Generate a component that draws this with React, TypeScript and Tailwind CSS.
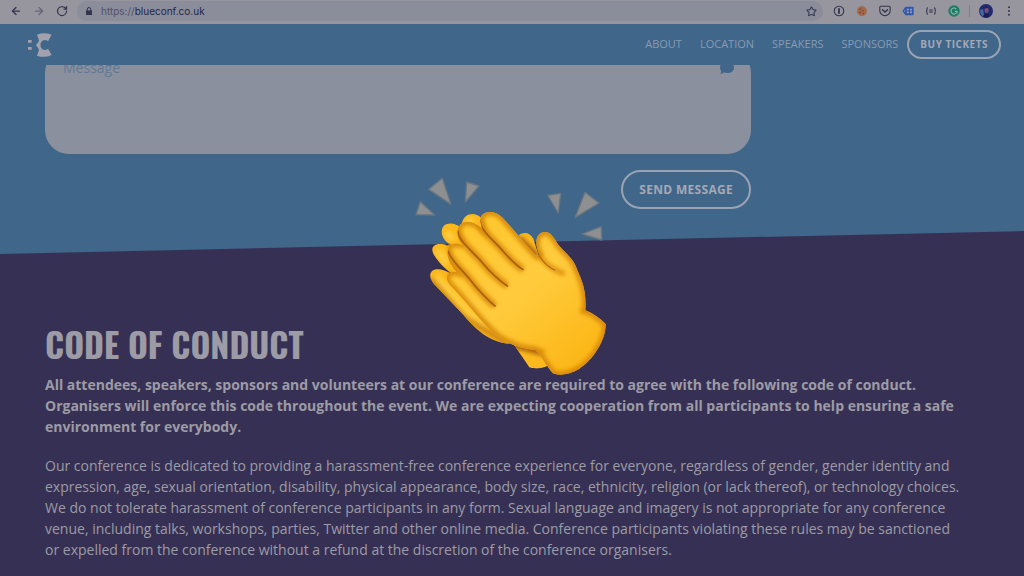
import type { ReactNode } from "react";
import { ArrowLeft, ArrowRight, RotateCw, Star } from "lucide-react";

const links = ["About", "Location", "Speakers", "Sponsors"];

const ToolbarButton = ({
  label,
  children,
}: {
  label: string;
  children: ReactNode;
}) => (
  <button
    type="button"
    aria-label={label}
    className="flex h-5 w-[23px] shrink-0 items-center justify-center"
  >
    {children}
  </button>
);

const LockIcon = () => (
  <svg viewBox="0 0 8 8" className="size-2" fill="currentColor">
    <path d="M1 3.400h6V8H1z" />
    <path d="M2.300 4V2.200a1.700 1.700 0 0 1 3.400 0V4" fill="none" stroke="currentColor" strokeWidth="1" />
  </svg>
);

const PocketIcon = () => (
  <svg viewBox="0 0 12 12" className="size-3" fill="none" stroke="currentColor">
    <path
      d="M1.8 1.3h8.4a1 1 0 0 1 1 1v3.2a5.2 5.2 0 0 1-10.4 0V2.3a1 1 0 0 1 1-1z"
      strokeWidth="1.1"
    />
    <path d="M3.5 4.7 6 7l2.5-2.3" strokeWidth="1.4" strokeLinecap="round" />
  </svg>
);

const OnePasswordIcon = () => (
  <svg viewBox="0 0 12 12" className="size-3" fill="none" stroke="currentColor">
    <circle cx="6" cy="6" r="4.8" strokeWidth="1.1" />
    <path d="M6 3.2v5.6" strokeWidth="1.8" />
  </svg>
);

const CookieIcon = () => (
  <svg viewBox="0 0 12 12" className="size-3">
    <path
      d="M6 1a5 5 0 1 0 5 5.3L10.600 4.600 9.400 2.800 7.600 1.400z"
      fill="#a46848"
    />
    <g fill="#603c3b">
      <circle cx="4.200" cy="4" r=".7" />
      <circle cx="7" cy="5.800" r=".7" />
      <circle cx="4" cy="7.500" r=".8" />
      <circle cx="7.300" cy="8.600" r=".6" />
    </g>
  </svg>
);

const TagIcon = () => (
  <svg viewBox="0 0 12 12" className="size-3">
    <path d="M3.5 1.8h7.3a.8.8 0 0 1 .8.8v6.8a.8.8 0 0 1-.8.8H3.5L.4 6z" fill="#3157ac" />
    <path
      d="M4.8 3.8h2v1.6h-2zM8 3.8h2v1.6H8zM4.8 6.6h2v1.6h-2zM8 6.6h2v1.6H8z"
      fill="#929ab8"
    />
    <circle cx="2.7" cy="6" r=".7" fill="#929ab8" />
  </svg>
);

const BracesIcon = () => (
  <svg viewBox="0 0 12 12" className="size-3" fill="none" stroke="currentColor">
    <path
      d="M3 2.700c-1.200 0-1 .9-1 1.900S1.700 6 1 6c.7 0 1 .400 1 1.400s-.2 1.900 1 1.900M9 2.700c1.200 0 1 .9 1 1.900S10.300 6 11 6c-.7 0-1 .400-1 1.400s.2 1.900-1 1.900"
      strokeWidth="1.100"
    />
    <path d="M4.200 5h3.600M4.200 7h3.600" strokeWidth="1.200" />
  </svg>
);

const GrammarlyIcon = () => (
  <svg viewBox="0 0 12 12" className="size-3" fill="none">
    <circle cx="6" cy="6" r="5.700" fill="#168067" />
    <path
      d="M8.200 4A3 3 0 1 0 9 6.400H6.800M9 6.400v1.800"
      stroke="#a0aaa9"
      strokeWidth="1.100"
    />
  </svg>
);

const Avatar = () => (
  <svg viewBox="0 0 14 14" className="size-3.5">
    <circle cx="7" cy="7" r="7" fill="#202a72" />
    <path d="M1 6l3-1 1 6-2 1A7 7 0 0 1 1 6z" fill="#49689d" />
    <path d="M5 13c.3-3 1-3.500 2.500-3.500S10 10.500 10 13a7 7 0 0 1-5 0z" fill="#1b1d4a" />
    <ellipse cx="7.600" cy="6" rx="2.100" ry="3" fill="#78507c" />
    <path d="M5.200 5c0-3 4.800-3 4.800 0-1-1.200-3.500-1.200-4.800 0z" fill="#24204c" />
  </svg>
);

const BrowserBar = () => (
  <div className="flex h-6 items-center bg-[#97959e] px-1 pb-0.5 text-[#34344f]">
    <ToolbarButton label="Back">
      <ArrowLeft className="size-3" strokeWidth={2.5} />
    </ToolbarButton>
    <div className="flex opacity-50">
      <ToolbarButton label="Forward">
        <ArrowRight className="size-3" strokeWidth={2.5} />
      </ToolbarButton>
    </div>
    <ToolbarButton label="Reload">
      <RotateCw className="size-3" strokeWidth={2.5} />
    </ToolbarButton>
    <div className="mx-1 flex h-5 flex-1 items-center rounded-full bg-[#8b8d9a] pl-2 pr-1">
      <LockIcon />
      <span className="flex-1 pl-2 font-['Inter',sans-serif] text-[10px] text-[#26264a]">
        <span className="text-[#50516b]">https://</span>blueconf.co.uk
      </span>
      <button type="button" aria-label="Bookmark" className="px-0.5">
        <Star className="size-[11px]" strokeWidth={2.2} />
      </button>
    </div>
    <ToolbarButton label="1Password">
      <OnePasswordIcon />
    </ToolbarButton>
    <ToolbarButton label="Cookies">
      <CookieIcon />
    </ToolbarButton>
    <ToolbarButton label="Pocket">
      <PocketIcon />
    </ToolbarButton>
    <ToolbarButton label="Tags">
      <TagIcon />
    </ToolbarButton>
    <ToolbarButton label="JSON">
      <BracesIcon />
    </ToolbarButton>
    <ToolbarButton label="Grammarly">
      <GrammarlyIcon />
    </ToolbarButton>
    <div className="mx-1 h-3 w-px bg-[#7f7e8b]" />
    <ToolbarButton label="Profile">
      <Avatar />
    </ToolbarButton>
    <ToolbarButton label="Menu">
      <svg viewBox="0 0 12 12" className="size-3" fill="currentColor">
        <circle cx="6" cy="2.200" r="1" />
        <circle cx="6" cy="6" r="1" />
        <circle cx="6" cy="9.800" r="1" />
      </svg>
    </ToolbarButton>
  </div>
);

const Logo = () => (
  <svg viewBox="0 0 75 72" className="h-6 w-[25px]" fill="#a3a1ab">
    <path d="M0 21h11v8H0zM0 42h11v8H0z" />
    <path d="M27 5q21-8 44 0L60 25q-4-4-10-4c-17 2-17 28 0 30q6 0 10-4l11 19q-21 10-44 2l6-17c-1-5-6-10-9-15 3-4 8-8 9-14z" />
  </svg>
);

const SiteHeader = () => (
  <header className="relative z-10 flex h-[41px] items-center justify-between bg-[#40668a] pl-7 pr-[23px]">
    <a href="#home" aria-label="Blueconf">
      <Logo />
    </a>
    <nav className="flex items-center">
      {links.map((link) => (
        <a
          key={link}
          href={`#${link.toLowerCase()}`}
          className="px-[9px] text-[11px] uppercase text-[#879bb2]"
        >
          {link}
        </a>
      ))}
      <a
        href="#tickets"
        className="flex h-[29px] items-center rounded-full border-2 border-[#9ba3b3] px-[11px] text-[10px] font-bold uppercase tracking-wider text-[#a4a9b6]"
      >
        Buy tickets
      </a>
    </nav>
  </header>
);

const hand =
  "M212 158C204 124 250 115 276 142C310 176 342 220 380 258L388 254C374 224 376 194 398 187C422 180 434 208 446 226C464 248 486 262 497 288C512 326 530 352 526 421C548 430 570 445 587 462C588 510 550 570 506 598C480 614 446 618 429 610C410 590 398 560 376 540C330 536 290 522 250 488C200 440 160 384 119 344C100 320 116 302 140 307C122 284 108 264 114 236C120 220 138 216 158 226C140 206 134 172 158 159C178 150 198 160 216 176Z";

const creases = [
  "M210 151C211 181 246 206 278 242Q310 280 339 299",
  "M144 184C146 214 190 246 217 278Q252 320 292 348",
  "M115 244C120 268 154 298 178 326Q215 374 255 408",
];

const ClapEmoji = () => (
  <svg
    viewBox="0 0 630 645"
    role="img"
    aria-label="Clapping hands"
    className="absolute left-1/2 top-[170px] z-20 -ml-[102px] w-[210px]"
  >
    <defs>
      <linearGradient id="skin" x1="120" y1="150" x2="480" y2="610" gradientUnits="userSpaceOnUse">
        <stop offset="0" stopColor="#ffc62b" />
        <stop offset=".5" stopColor="#ffcc3e" />
        <stop offset="1" stopColor="#fcb615" />
      </linearGradient>
      <clipPath id="front">
        <path d={hand} />
      </clipPath>
      <filter id="soft" x="-20%" y="-20%" width="140%" height="140%">
        <feGaussianBlur stdDeviation="7" />
      </filter>
      <filter id="fine" x="-20%" y="-20%" width="140%" height="140%">
        <feGaussianBlur stdDeviation="2" />
      </filter>
      <clipPath id="back">
        <path d="M155 162C162 126 196 126 212 142L230 190L150 250L160 330L180 410L300 521C240 518 196 478 160 434L80 350C52 326 56 298 82 298C98 296 110 306 124 310C100 292 74 264 68 246C62 224 84 216 112 226L120 222C94 210 86 174 108 163C126 157 142 164 150 172Z" />
        <path d="M326 196C342 184 360 188 370 206L388 262L370 255Z" />
        <path d="M312 524L380 536L412 588C396 596 374 598 358 592Z" />
      </clipPath>
    </defs>
    <g fill="#8e8f90" stroke="#687681" strokeWidth="4" strokeLinejoin="round" filter="url(#fine)">
      <path d="M97 25L56 58L123 103Z" />
      <path d="M170 36L207 48L166 96Z" />
      <path d="M31 95L18 134L74 135Z" />
      <path d="M413 76L452 70L445 129Z" />
      <path d="M525 67L567 99L495 143Z" />
      <path d="M574 170L516 192L575 210Z" />
    </g>
    <g clipPath="url(#back)">
      <path d="M40 110H420V610H40Z" fill="#fcb91d" />
      <g fill="none" filter="url(#soft)">
        <path d="M170 150L190 160M110 185L130 210M84 240L110 280M78 320L230 480" stroke="#ffce40" strokeWidth="20" />
        <path d="M155 162L230 230M118 226L150 290M118 310L290 500M62 326L160 440L300 525" stroke="#d08409" strokeWidth="16" />
        <path d="M326 205L380 260M310 524L410 550" stroke="#a95f08" strokeWidth="20" />
      </g>
      <path
        d="M155 160C160 182 190 206 212 216M108 225C126 220 140 236 150 250M116 308L145 315"
        fill="none"
        stroke="#b66c0a"
        strokeWidth="4"
      />
    </g>
    <path d={hand} fill="url(#skin)" />
    <g clipPath="url(#front)" fill="none">
      <path d={hand} stroke="#d78907" strokeWidth="20" filter="url(#soft)" />
      <g stroke="#d98a09" strokeWidth="20" filter="url(#soft)">
        {creases.map((d) => (
          <path key={d} d={d} />
        ))}
        <path d="M382 246C398 278 430 300 464 312" strokeWidth="12" />
      </g>
      <g stroke="#a86008" strokeWidth="5" strokeLinecap="round" filter="url(#fine)">
        {creases.map((d) => (
          <path key={d} d={d} />
        ))}
        <path d="M378 232C384 262 410 290 434 300" stroke="#b66c0a" strokeWidth="4" />
      </g>
      <path
        d="M526 421L510 424M376 540C390 548 396 548 404 540"
        stroke="#d78907"
        strokeWidth="10"
        filter="url(#soft)"
      />
    </g>
  </svg>
);

const ContactForm = () => (
  <form
    className="-mt-4 ml-[45px] mr-4 flex max-w-[706px] flex-col"
    onSubmit={(e) => e.preventDefault()}
  >
    <div className="relative">
      <textarea
        aria-label="Message"
        placeholder="Message"
        className="block h-[105px] w-full resize-none rounded-[24px] bg-[#8b909e] px-[18px] py-2 text-[14px] leading-[21px] text-[#40668a] outline-none placeholder:text-[#5e7a96] placeholder:opacity-100"
      />
      <svg viewBox="0 0 42 36" className="absolute right-[17px] top-[13px] h-3 w-3.5" fill="#40668a">
        <path d="M21 0C33 0 42 7 42 17S33 33 21 33c-4 0-7-1-9-2-3 3-7 5-11 5 2-3 3-6 2-10-2-3-3-6-3-9C0 7 9 0 21 0z" />
      </svg>
    </div>
    <button
      type="submit"
      className="mt-4 h-[39px] self-end rounded-full border-2 border-[#9ba3b3] px-4 text-[12px] font-bold uppercase tracking-wide text-[#a4a9b6]"
    >
      Send message
    </button>
  </form>
);

const CodeOfConduct = () => (
  <section className="mt-[22px] flex-1 bg-[#363154] px-[45px] pb-3 pt-[91px] text-[14px] leading-[21px] text-[#9d9ba5] [clip-path:polygon(0_23px,100%_0,100%_100%,0_100%)]">
    <h2 className="font-['Oswald','Roboto_Condensed',sans-serif] text-[34px] font-bold uppercase leading-[44px]">
      Code of Conduct
    </h2>
    <p className="mt-2 font-bold">
      All attendees, speakers, sponsors and volunteers at our conference are required to agree with the following code of conduct.
      <br />
      Organisers will enforce this code throughout the event. We are expecting cooperation from all participants to help ensuring a safe
      <br />
      environment for everybody.
    </p>
    <p className="mt-[18px]">
      Our conference is dedicated to providing a harassment-free conference experience for everyone, regardless of gender, gender identity and
      <br />
      expression, age, sexual orientation, disability, physical appearance, body size, race, ethnicity, religion (or lack thereof), or technology choices.
      <br />
      We do not tolerate harassment of conference participants in any form. Sexual language and imagery is not appropriate for any conference
      <br />
      venue, including talks, workshops, parties, Twitter and other online media. Conference participants violating these rules may be sanctioned
      <br />
      or expelled from the conference without a refund at the discretion of the conference organisers.
    </p>
  </section>
);

const App = () => {
  return (
    <div className="relative flex min-h-screen flex-col overflow-hidden bg-[#40668a] font-['Open_Sans',sans-serif]">
      <BrowserBar />
      <SiteHeader />
      <main className="flex flex-1 flex-col">
        <ContactForm />
        <CodeOfConduct />
      </main>
      <ClapEmoji />
    </div>
  );
};

export default App;
